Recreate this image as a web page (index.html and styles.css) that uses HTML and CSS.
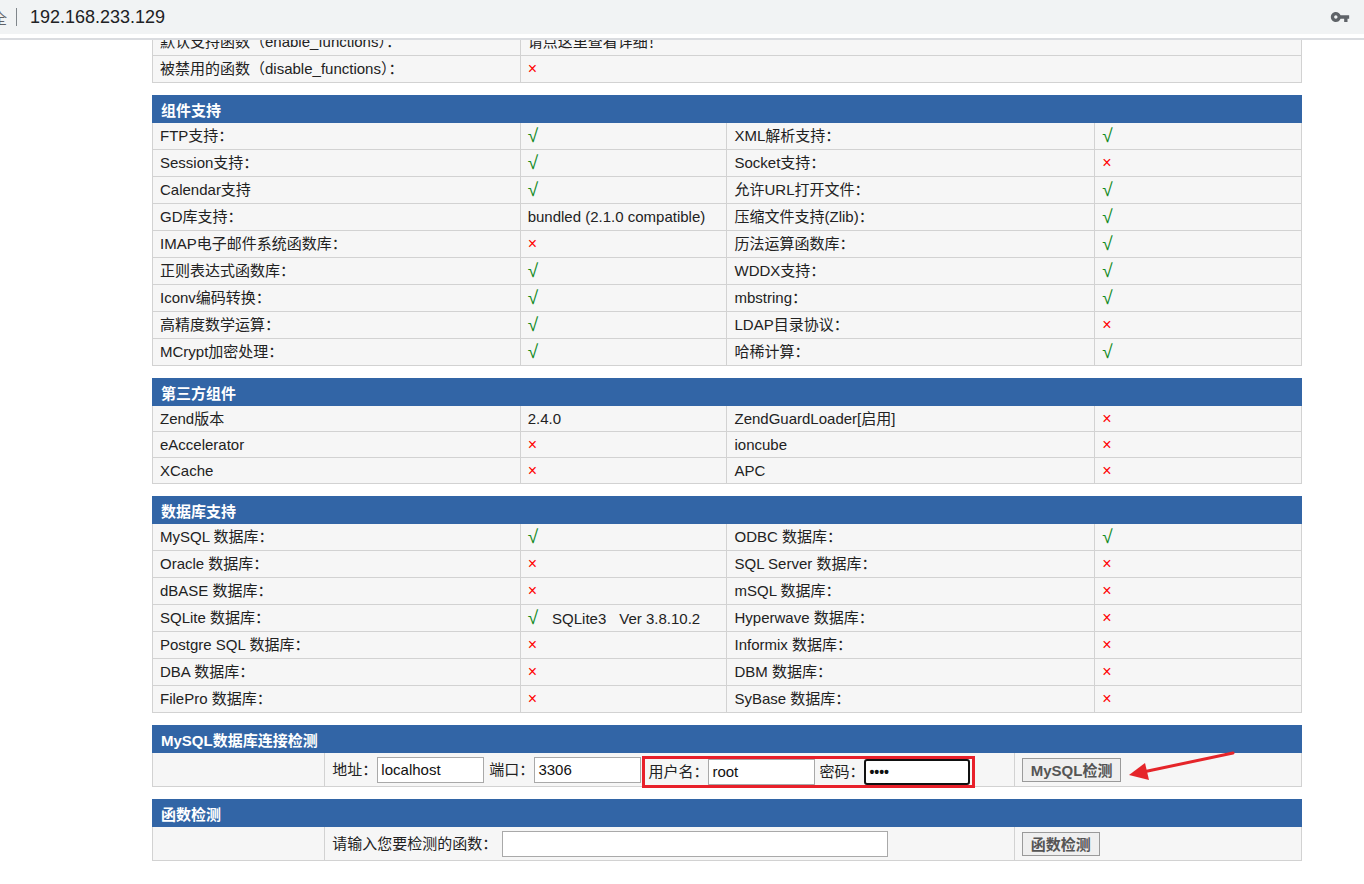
FILE: index.html
```html
<!DOCTYPE html>
<html lang="zh-CN">
<head>
<meta charset="utf-8">
<title>PHP探针</title>
<link rel="stylesheet" href="styles.css">
</head>
<body>
<div class="chrome">
  <div class="omni">
    <span class="secure"><span class="secure-text">不安全</span></span>
    <span class="sep"></span>
    <span class="url">192.168.233.129</span>
    <svg class="key" viewBox="0 0 24 24" width="20" height="20"><path fill="#5f6368" d="M12.65 10C11.83 7.67 9.61 6 7 6c-3.31 0-6 2.69-6 6s2.69 6 6 6c2.61 0 4.83-1.67 5.65-4H17v4h4v-4h2v-4H12.65zM7 14c-1.1 0-2-.9-2-2s.9-2 2-2 2 .9 2 2-.9 2-2 2z"/></svg>
  </div>
  <div class="chrome-line"></div>
</div>
<div class="viewport">
  <div class="page">
    <table class="tb">
      <colgroup><col class="c32"><col></colgroup>
      <tr><td>默认支持函数（enable_functions）：</td><td>请点这里查看详细！</td></tr>
      <tr><td>被禁用的函数（disable_functions）：</td><td><span class="no">×</span></td></tr>
    </table>

    <table class="tb">
      <colgroup><col class="c32"><col class="c18"><col class="c32"><col class="c18"></colgroup>
      <tr><th colspan="4">组件支持</th></tr>
      <tr><td>FTP支持：</td><td><span class="yes">√</span></td><td>XML解析支持：</td><td><span class="yes">√</span></td></tr>
      <tr><td>Session支持：</td><td><span class="yes">√</span></td><td>Socket支持：</td><td><span class="no">×</span></td></tr>
      <tr><td>Calendar支持</td><td><span class="yes">√</span></td><td>允许URL打开文件：</td><td><span class="yes">√</span></td></tr>
      <tr><td>GD库支持：</td><td>bundled (2.1.0 compatible)</td><td>压缩文件支持(Zlib)：</td><td><span class="yes">√</span></td></tr>
      <tr><td>IMAP电子邮件系统函数库：</td><td><span class="no">×</span></td><td>历法运算函数库：</td><td><span class="yes">√</span></td></tr>
      <tr><td>正则表达式函数库：</td><td><span class="yes">√</span></td><td>WDDX支持：</td><td><span class="yes">√</span></td></tr>
      <tr><td>Iconv编码转换：</td><td><span class="yes">√</span></td><td>mbstring：</td><td><span class="yes">√</span></td></tr>
      <tr><td>高精度数学运算：</td><td><span class="yes">√</span></td><td>LDAP目录协议：</td><td><span class="no">×</span></td></tr>
      <tr><td>MCrypt加密处理：</td><td><span class="yes">√</span></td><td>哈稀计算：</td><td><span class="yes">√</span></td></tr>
    </table>

    <table class="tb short">
      <colgroup><col class="c32"><col class="c18"><col class="c32"><col class="c18"></colgroup>
      <tr><th colspan="4">第三方组件</th></tr>
      <tr><td>Zend版本</td><td>2.4.0</td><td>ZendGuardLoader[启用]</td><td><span class="no">×</span></td></tr>
      <tr><td>eAccelerator</td><td><span class="no">×</span></td><td>ioncube</td><td><span class="no">×</span></td></tr>
      <tr><td>XCache</td><td><span class="no">×</span></td><td>APC</td><td><span class="no">×</span></td></tr>
    </table>

    <table class="tb">
      <colgroup><col class="c32"><col class="c18"><col class="c32"><col class="c18"></colgroup>
      <tr><th colspan="4">数据库支持</th></tr>
      <tr><td>MySQL 数据库：</td><td><span class="yes">√</span></td><td>ODBC 数据库：</td><td><span class="yes">√</span></td></tr>
      <tr><td>Oracle 数据库：</td><td><span class="no">×</span></td><td>SQL Server 数据库：</td><td><span class="no">×</span></td></tr>
      <tr><td>dBASE 数据库：</td><td><span class="no">×</span></td><td>mSQL 数据库：</td><td><span class="no">×</span></td></tr>
      <tr><td>SQLite 数据库：</td><td><span class="yes">√</span><span class="ver">SQLite3</span><span class="ver">Ver 3.8.10.2</span></td><td>Hyperwave 数据库：</td><td><span class="no">×</span></td></tr>
      <tr><td>Postgre SQL 数据库：</td><td><span class="no">×</span></td><td>Informix 数据库：</td><td><span class="no">×</span></td></tr>
      <tr><td>DBA 数据库：</td><td><span class="no">×</span></td><td>DBM 数据库：</td><td><span class="no">×</span></td></tr>
      <tr><td>FilePro 数据库：</td><td><span class="no">×</span></td><td>SyBase 数据库：</td><td><span class="no">×</span></td></tr>
    </table>

    <table class="tb form">
      <colgroup><col class="c15"><col class="c60"><col></colgroup>
      <tr><th colspan="3">MySQL数据库连接检测</th></tr>
      <tr>
        <td></td>
        <td><div class="fields">
          <label>地址：</label><input class="inp" type="text" value="localhost">
          <label class="l2">端口：</label><input class="inp" type="text" value="3306">
          <span class="mark">
            <label>用户名：</label><input class="inp" type="text" value="root">
            <label class="l3">密码：</label><input class="inp focus" type="password" value="root">
          </span>
        </div></td>
        <td><button class="btn" type="button">MySQL检测</button></td>
      </tr>
    </table>

    <table class="tb form">
      <colgroup><col class="c15"><col class="c60"><col></colgroup>
      <tr><th colspan="3">函数检测</th></tr>
      <tr>
        <td></td>
        <td><div class="fields"><label>请输入您要检测的函数：</label><input class="inp wide" type="text"></div></td>
        <td><button class="btn" type="button">函数检测</button></td>
      </tr>
    </table>
  </div>
  <svg class="arrow" width="120" height="34" viewBox="0 0 120 34">
    <line x1="110" y1="3" x2="20" y2="22" stroke="#e5252a" stroke-width="3" stroke-linecap="round"/>
    <polygon points="6,25 22,13 26,30" fill="#e5252a"/>
  </svg>
</div>
</body>
</html>
```
FILE: styles.css
```css
* { box-sizing: border-box; }
html, body { margin: 0; padding: 0; background: #fff; }
body {
  font-family: "Liberation Sans", "Noto Sans CJK SC", sans-serif;
  font-size: 15px;
  color: #222;
  width: 1364px;
  height: 884px;
  overflow: hidden;
}
.chrome { height: 40px; background: #fff; }
.omni {
  height: 34px;
  background: #f1f3f4;
  display: flex;
  align-items: center;
}
.secure {
  width: 7px;
  overflow: hidden;
  display: flex;
  justify-content: flex-end;
  color: #5f6368;
  font-size: 15px;
  white-space: nowrap;
}
.secure-text { flex: none; }
.sep {
  width: 1px;
  height: 18px;
  background: #80868b;
  margin-left: 9px;
}
.url {
  margin-left: 13px;
  font-family: "Liberation Sans", "Noto Sans", sans-serif;
  font-size: 18px;
  color: #202124;
  flex: 1;
}
.key { margin-right: 14px; }
.chrome-line { height: 2px; margin-top: 4px; background: #dadce0; }
.viewport {
  height: 844px;
  overflow: hidden;
  position: relative;
}
.page {
  margin-top: -12px;
  padding-left: 152px;
}
.tb {
  width: 1150px;
  table-layout: fixed;
  border-collapse: collapse;
  margin-bottom: 12px;
  background: #f6f6f6;
}
.c32 { width: 32%; }
.c18 { width: 18%; }
.c15 { width: 15%; }
.c60 { width: 60%; }
.tb th {
  height: 27px;
  background: #3265a6;
  color: #fff;
  font-weight: bold;
  text-align: left;
  padding: 0 8px;
  border: 1px solid #3265a6;
  font-size: 15px;
}
.tb td {
  height: 27px;
  padding: 0 7px;
  border: 1px solid #d2d2d2;
  white-space: nowrap;
  overflow: hidden;
  line-height: 18px;
}
.short td { height: 26px; }
.yes {
  color: #138a1e;
  font-family: "Liberation Sans", sans-serif;
  font-size: 19px;
}
.no { color: #f00; font-size: 16px; }
.ver { margin-left: 14px; }
.ver + .ver { margin-left: 13px; }
.tb.form td { height: 34px; overflow: visible; }
.fields { display: flex; align-items: center; }
.l2 { margin-left: 5px; }
.l3 { margin-left: 4px; }
.inp {
  height: 26px;
  width: 107px;
  border: 1px solid #a9a9a9;
  background: #fff;
  font-family: "Liberation Sans", sans-serif;
  font-size: 15px;
  padding: 0 3px;
  color: #111;
}
.inp.wide { width: 386px; margin-left: 5px; }
.inp.focus {
  border: 2px solid #111;
  border-radius: 3px;
  width: 106px;
  font-size: 14px;
  font-weight: bold;
}
.mark {
  display: flex;
  align-items: center;
  border: 3px solid #e8202a;
  height: 32px;
  margin-left: 1px;
  margin-top: 2px;
  margin-bottom: -2px;
  padding: 0 2px 0 3px;
}
.btn {
  height: 24px;
  padding: 0 8px;
  background: #efefef;
  border: 1px solid #9a9a9a;
  color: #555;
  font-weight: bold;
  font-family: "Liberation Sans", "Noto Sans CJK SC", sans-serif;
  font-size: 15px;
}
.arrow {
  position: absolute;
  left: 1123px;
  top: 710px;
}
```
